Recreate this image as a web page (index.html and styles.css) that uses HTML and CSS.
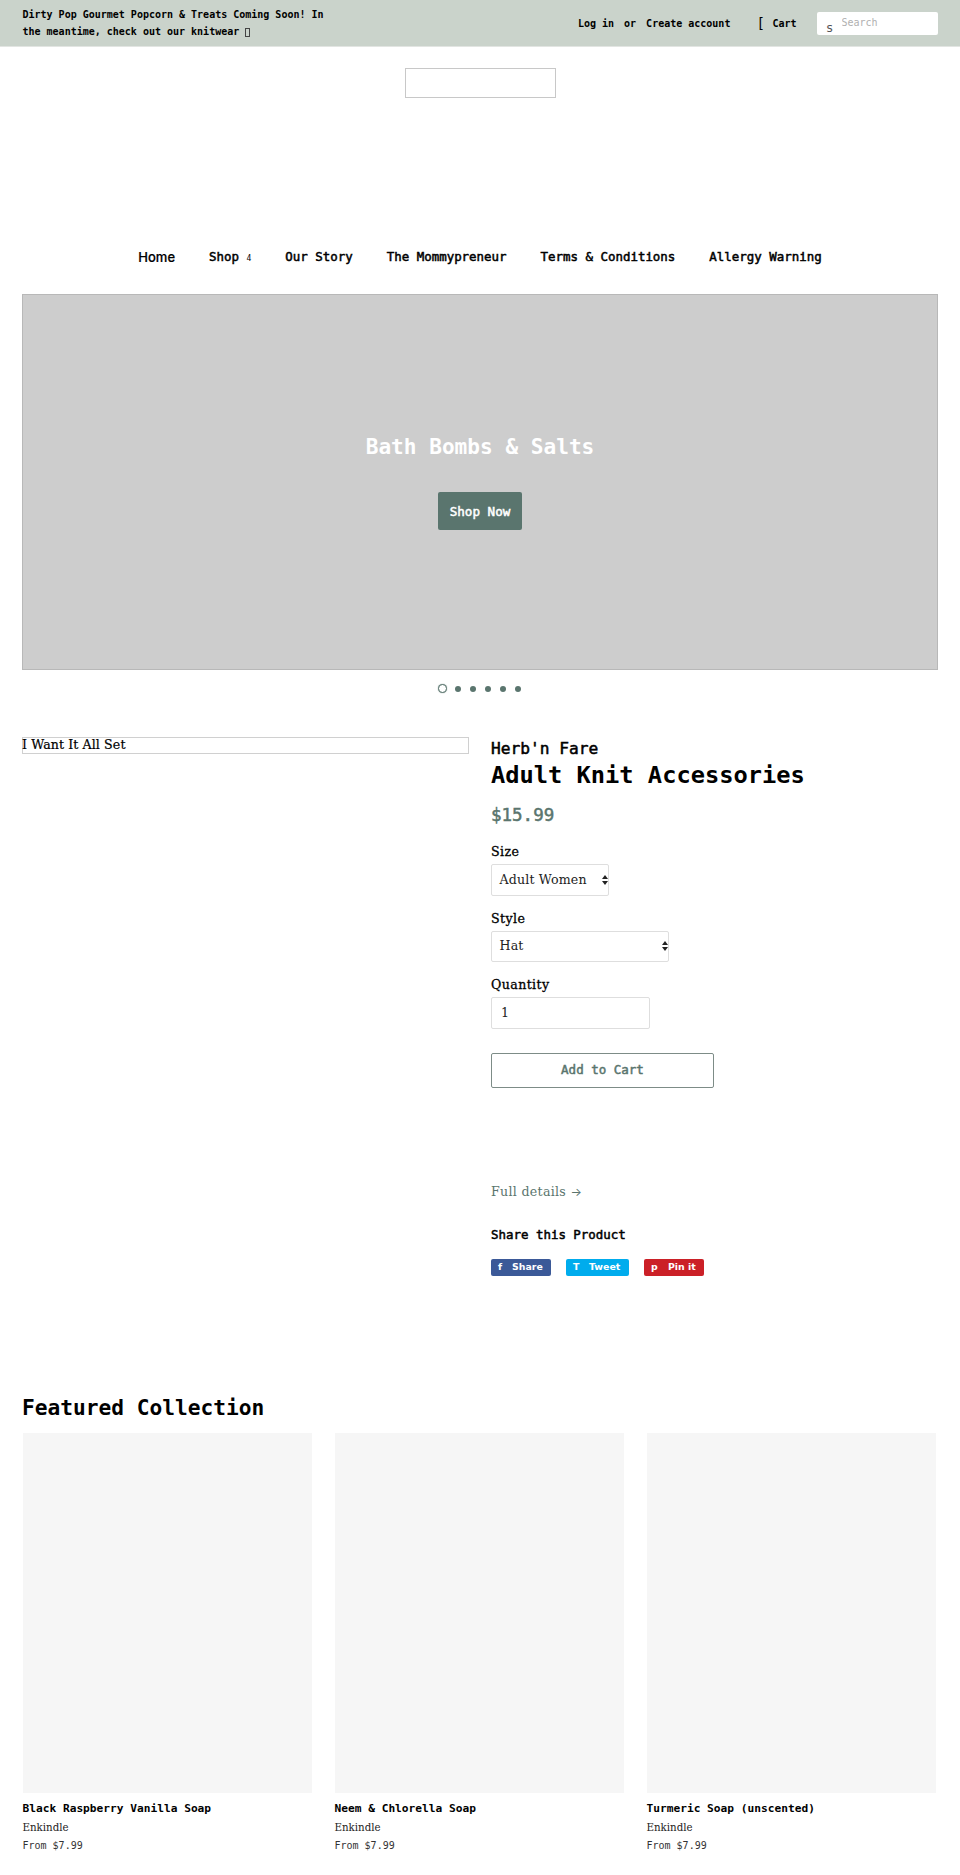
FILE: index.html
```html
<!DOCTYPE html>
<html lang="en">
<head>
    <meta charset="UTF-8">
    <meta name="viewport" content="width=device-width, initial-scale=1.0">
    <title>Herb'n Fare</title>
    <link rel="stylesheet" href="styles.css">
</head>
<body>
    <div class="header-bar">
        <div class="header-message">Dirty Pop Gourmet Popcorn &amp; Treats Coming Soon! In the meantime, check out our knitwear <span class="message-box"></span></div>
        <div class="header-links">
            <a href="#">Log in</a>
            <span class="header-or">or</span>
            <a href="#">Create account</a>
            <a href="#" class="cart-link"><span class="cart-icon">[</span>Cart</a>
            <form class="header-search">
                <span class="search-icon">s</span>
                <input type="search" placeholder="Search">
            </form>
        </div>
    </div>

    <div class="wrapper">
        <header class="site-header">
            <a href="#" class="logo"></a>
            <nav class="site-nav">
                <a href="#" class="nav-home">Home</a>
                <a href="#">Shop <span class="nav-arrow">4</span></a>
                <a href="#">Our Story</a>
                <a href="#">The Mommypreneur</a>
                <a href="#">Terms &amp; Conditions</a>
                <a href="#">Allergy Warning</a>
            </nav>
        </header>

        <section class="slide">
            <h2>Bath Bombs &amp; Salts</h2>
            <a href="#" class="btn">Shop Now</a>
        </section>
        <div class="slide-dots">
            <span class="dot dot-active"></span>
            <span class="dot"></span>
            <span class="dot"></span>
            <span class="dot"></span>
            <span class="dot"></span>
            <span class="dot"></span>
        </div>

        <section class="product">
            <div class="product-photo">I Want It All Set</div>
            <div class="product-info">
                <h3 class="vendor">Herb'n Fare</h3>
                <h1>Adult Knit Accessories</h1>
                <div class="price">$15.99</div>
                <form>
                    <div class="field">
                        <label>Size</label>
                        <div class="select select-size">Adult Women
                            <svg width="6" height="10" viewBox="0 0 6 10"><path d="M3 0L6 4H0zM3 10L0 6H6z" fill="#222"/></svg>
                        </div>
                    </div>
                    <div class="field">
                        <label>Style</label>
                        <div class="select select-style">Hat
                            <svg width="6" height="10" viewBox="0 0 6 10"><path d="M3 0L6 4H0zM3 10L0 6H6z" fill="#222"/></svg>
                        </div>
                    </div>
                    <div class="field">
                        <label for="quantity">Quantity</label>
                        <input type="text" id="quantity" value="1">
                    </div>
                    <button type="button" class="add-to-cart">Add to Cart</button>
                </form>
                <a href="#" class="full-details">Full details <span>→</span></a>
                <h4>Share this Product</h4>
                <div class="share">
                    <a href="#" class="share-facebook"><span>f</span>Share</a>
                    <a href="#" class="share-twitter"><span>T</span>Tweet</a>
                    <a href="#" class="share-pinterest"><span>p</span>Pin it</a>
                </div>
            </div>
        </section>

        <section class="collection">
            <h2>Featured Collection</h2>
            <div class="collection-grid">
                <a href="#" class="card">
                    <div class="card-photo"></div>
                    <p class="card-title">Black Raspberry Vanilla Soap</p>
                    <p class="card-vendor">Enkindle</p>
                    <p class="card-price">From $7.99</p>
                </a>
                <a href="#" class="card">
                    <div class="card-photo"></div>
                    <p class="card-title">Neem &amp; Chlorella Soap</p>
                    <p class="card-vendor">Enkindle</p>
                    <p class="card-price">From $7.99</p>
                </a>
                <a href="#" class="card">
                    <div class="card-photo"></div>
                    <p class="card-title">Turmeric Soap (unscented)</p>
                    <p class="card-vendor">Enkindle</p>
                    <p class="card-price">From $7.99</p>
                </a>
            </div>
        </section>
    </div>
</body>
</html>
```
FILE: styles.css
```css
* {
    box-sizing: border-box;
}
body {
    margin: 0;
    background-color: #fff;
    color: #000;
    font-family: 'DejaVu Serif', serif;
    font-size: 12.6px;
    line-height: 22px;
}
a {
    color: inherit;
    text-decoration: none;
}
h1, h2, h3, h4, p {
    margin: 0;
}
h1, h2, h3, h4, .header-bar, .site-nav, .btn, .price, .add-to-cart, .card-title {
    font-family: 'DejaVu Sans Mono', monospace;
    font-weight: bold;
}
/* medium weight: regular letters with a thin outline */
.vendor, .product h4, .site-nav, .btn, .price, .add-to-cart {
    font-weight: normal;
    -webkit-text-stroke: 0.5px;
}

/* top bar */
.header-bar {
    display: flex;
    justify-content: space-between;
    align-items: center;
    height: 47px;
    padding: 0 22px 0 22.5px;
    background-color: #cad3cb;
    border-bottom: 1px solid #e2e5e2;
    font-size: 10px;
    line-height: 17px;
}
.header-message {
    width: 310px;
}
.message-box {
    display: inline-block;
    width: 5px;
    height: 9px;
    border: 1px solid #444;
    vertical-align: -2px;
}
.header-links {
    display: flex;
    align-items: center;
}
.header-or {
    margin: 0 10px;
}
.cart-link {
    display: flex;
    align-items: center;
    margin: 0 20.5px 0 26px;
}
.cart-icon {
    width: 16px;
    font-size: 14px;
    font-weight: normal;
}
.header-search {
    display: flex;
    width: 121px;
    height: 23px;
    padding-left: 9.5px;
    background-color: #fff;
    border-radius: 2px;
}
.search-icon {
    width: 15px;
    padding-top: 8px;
    color: #555;
    font-family: 'DejaVu Sans', sans-serif;
    font-size: 12px;
    font-weight: normal;
}
.header-search input {
    width: 90px;
    height: 21px;
    padding: 0;
    border: none;
    outline: none;
    background: none;
    font-family: 'DejaVu Sans Mono', monospace;
    font-size: 10px;
}
.header-search input::placeholder {
    color: #b0b0b0;
}

/* logo and navigation */
.wrapper {
    padding: 0 22px;
}
.site-header {
    display: flex;
    flex-direction: column;
    align-items: center;
    height: 247px;
    padding-top: 21px;
}
.logo {
    width: 151px;
    height: 30px;
    border: 1px solid #c8c8c8;
}
.site-nav {
    display: flex;
    gap: 34px;
    margin-top: 148px;
    font-size: 12.45px;
}
.nav-home {
    font-family: 'Inter', sans-serif;
    font-size: 13px;
    font-weight: 500;
    -webkit-text-stroke: 0.2px;
}
.nav-arrow {
    font-size: 8px;
    -webkit-text-stroke: 0;
}

/* slideshow */
.slide {
    display: flex;
    flex-direction: column;
    align-items: center;
    height: 376px;
    padding-top: 135px;
    background-color: #cdcdcd;
    border: 1px solid #b8b8b8;
    color: #fff;
}
.slide h2 {
    font-size: 21.1px;
    line-height: 34px;
}
.btn {
    width: 84px;
    height: 38px;
    margin-top: 28px;
    background-color: #5a756e;
    border-radius: 2px;
    line-height: 39px;
    text-align: center;
}
.slide-dots {
    display: flex;
    justify-content: center;
    align-items: center;
    gap: 9px;
    height: 37px;
}
.dot {
    width: 6px;
    height: 6px;
    border-radius: 50%;
    background-color: #5a756e;
}
.dot-active {
    width: 9px;
    height: 9px;
    margin: 0 -1.5px;
    background-color: #fff;
    border: 1px solid #5a756e;
    box-shadow: 0 0 1px #5a756e;
}

/* product */
.product {
    display: grid;
    grid-template-columns: 447px 1fr;
    gap: 22px;
    align-items: start;
    margin-top: 30px;
}
.product-photo {
    height: 17px;
    border: 1px solid #d0d0d0;
    letter-spacing: 0.1px;
    line-height: 14px;
    text-indent: -1px;
    -webkit-text-stroke: 0.2px;
}
.vendor {
    font-size: 16.2px;
    line-height: 23px;
}
.product h1 {
    font-size: 23.7px;
    line-height: 31px;
}
.price {
    margin: 4px 0 6px;
    color: #5a756e;
    font-size: 17.5px;
    line-height: 40px;
}
.field {
    height: 66.5px;
}
.field label {
    display: block;
    margin-bottom: 1px;
    letter-spacing: 0.4px;
    -webkit-text-stroke: 0.3px;
}
.select, .field input {
    height: 31.5px;
    border: 1px solid #dedede;
    border-radius: 2px;
    color: #222;
}
.select {
    display: flex;
    justify-content: space-between;
    align-items: center;
    padding-left: 7.5px;
    letter-spacing: 0.15px;
}
.select-size {
    width: 118px;
}
.select-style {
    width: 178px;
}
.field input {
    display: block;
    width: 159px;
    padding: 0 9px;
    font-family: 'DejaVu Serif', serif;
    font-size: 12.6px;
}
.add-to-cart {
    display: block;
    width: 223px;
    height: 35px;
    margin-top: 12px;
    padding: 0 0 2px;
    background-color: #fff;
    border: 1px solid #7d8c87;
    border-radius: 2px;
    color: #5a756e;
    font-size: 12.5px;
}
.full-details {
    display: block;
    margin-top: 93px;
    color: #5a756e;
    letter-spacing: 0.3px;
}
.full-details span {
    font-family: 'Inter', sans-serif;
    font-size: 12px;
    line-height: 1;
}
.product h4 {
    margin-top: 21px;
    font-size: 12.45px;
}
.share {
    display: flex;
    gap: 15px;
    margin-top: 13px;
    color: #fff;
    font-family: 'DejaVu Sans', sans-serif;
    font-size: 9.4px;
    font-weight: bold;
    line-height: 16px;
}
.share a {
    display: flex;
    width: 60px;
    height: 17px;
    padding-left: 7px;
    border-radius: 2px;
}
.share span {
    width: 14px;
}
.share .share-facebook {
    background-color: #3b5998;
}
.share .share-twitter {
    width: 63px;
    background-color: #00aced;
}
.share .share-twitter span {
    width: 16px;
}
.share .share-pinterest {
    background-color: #cb2027;
}
.share .share-pinterest span {
    width: 17px;
}

/* collection */
.collection {
    margin-top: 118px;
}
.collection h2 {
    font-size: 21.2px;
    line-height: 28px;
}
.collection-grid {
    display: grid;
    grid-template-columns: repeat(3, 289.5px);
    gap: 22.5px;
    margin-top: 11px;
    padding-left: 0.5px;
}
.card {
    font-size: 11.2px;
    line-height: 18.5px;
}
.card-photo {
    height: 360px;
    margin-bottom: 7px;
    background-color: #f6f6f6;
}
.card-vendor {
    color: #222;
    font-family: 'DejaVu Serif Condensed', 'DejaVu Serif', serif;
    font-size: 11.4px;
    font-stretch: condensed;
}
.card-price {
    color: #333;
    font-family: 'DejaVu Sans Mono', monospace;
    font-size: 10px;
}
```
